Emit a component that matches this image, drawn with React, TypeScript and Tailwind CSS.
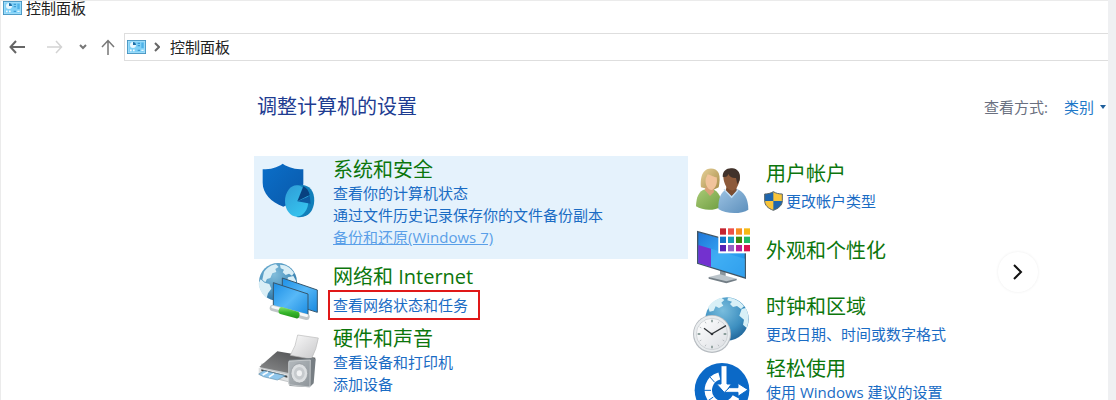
import type { ReactNode } from "react";

function PanelIcon() {
  return (
    <svg viewBox="0 0 57 42" className="h-[14px] w-[19px] shrink-0" aria-hidden="true">
      <rect x="1" y="1" width="55" height="40" fill="#7fd0f7" stroke="#3f8fbe" strokeWidth="3" />
      <rect x="4" y="4" width="49" height="34" fill="none" stroke="#a9e1fb" strokeWidth="2" />
      <circle cx="18" cy="15" r="9" fill="#e9f7fe" />
      <path d="M18 15V6a9 9 0 0 1 9 9z" fill="#1b6ea8" />
      <path d="M9 31h5M18 31h5" stroke="#f4fbff" strokeWidth="5" />
      <path d="M32 10h7M32 17h7M32 31h7" stroke="#3c9bd3" strokeWidth="4" />
      <rect x="43" y="8" width="7" height="16" fill="#4eb2e8" />
      <path d="M43 31h7" stroke="#e8f8ff" strokeWidth="4" />
    </svg>
  );
}

function SecurityIcon() {
  return (
    <svg viewBox="0 0 192 180" className="h-[60px] w-[64px]" aria-hidden="true">
      <defs>
        <linearGradient id="shield" x1="0" y1="0" x2="1" y2="1">
          <stop offset="0" stopColor="#0b6fc9" />
          <stop offset="1" stopColor="#0958a9" />
        </linearGradient>
        <linearGradient id="pie" x1="0" y1="0" x2="0.6" y2="1">
          <stop offset="0" stopColor="#2f9bd6" />
          <stop offset="1" stopColor="#36c3ee" />
        </linearGradient>
      </defs>
      <path d="M20 28c24 0 43-5 60-17 18 12 38 17 62 17v42c0 34-25 57-60 70-37-14-62-40-62-72z" fill="url(#shield)" />
      <path d="M122 76c12-4 26-2 37 6 18 14 20 46 9 68-8 15-25 24-46 21z" fill="#117fba" />
      <ellipse cx="122" cy="123" rx="35" ry="47" fill="url(#pie)" />
      <path d="M124 124 142 79c10 5 16 13 19 26z" fill="#08417f" />
      <path d="M124 124l37-16 3 23z" fill="#0e5aa1" />
    </svg>
  );
}

function Continents() {
  return (
    <g fill="#d9eef6">
      <path d="M-42-30c10-14 24-22 36-23l8 8-10 6 3 9-12 4-6 14-10 3-5 10-9-8z" />
      <path d="M6-52c18 0 34 10 42 25l-6 8-9-6-10 4-9-8 4-8-10-4z" />
      <path d="M-52-8l12 10 14 4 6 14-10 14-4 14c-14-10-24-28-24-45z" />
      <path d="M30-14l16-4 8 14c2 14-2 28-8 36l-9-8-2-14-9-10z" />
    </g>
  );
}

function NetworkIcon() {
  return (
    <svg viewBox="0 0 192 180" className="h-[60px] w-[64px]" aria-hidden="true">
      <defs>
        <radialGradient id="netGlobe" cx="0.4" cy="0.3" r="0.75">
          <stop offset="0" stopColor="#82bddb" />
          <stop offset="0.6" stopColor="#4c94bf" />
          <stop offset="1" stopColor="#2a6d9e" />
        </radialGradient>
        <linearGradient id="screenBlue" x1="0" y1="0" x2="1" y2="1">
          <stop offset="0" stopColor="#1c8fe6" />
          <stop offset="0.5" stopColor="#57b8f7" />
          <stop offset="1" stopColor="#1688df" />
        </linearGradient>
        <linearGradient id="plug" x1="0" y1="0" x2="0" y2="1">
          <stop offset="0" stopColor="#88e26d" />
          <stop offset="0.5" stopColor="#35b52a" />
          <stop offset="1" stopColor="#229018" />
        </linearGradient>
      </defs>
      <circle cx="66" cy="63" r="57" fill="url(#netGlobe)" />
      <g transform="translate(66 63)"><Continents /></g>
      <path d="M79 51 184 87v67l-105-33z" fill="url(#screenBlue)" stroke="#35566d" strokeWidth="3" />
      <path d="M52 65 156 99v72L52 135z" fill="url(#screenBlue)" stroke="#35566d" strokeWidth="3" />
      <path d="m50 141 102 27" stroke="#c0c6c8" strokeWidth="18" strokeLinecap="round" />
      <path d="m50 138 102 26" stroke="#f7f9f9" strokeWidth="8" strokeLinecap="round" />
      <path d="m77 138 49 14q7 4 4 14-3 9-10 6l-47-13q-7-3-5-12 3-10 9-9z" fill="url(#plug)" />
    </svg>
  );
}

function PrinterIcon() {
  return (
    <svg viewBox="0 0 192 180" className="h-[60px] w-[64px]" aria-hidden="true">
      <defs>
        <linearGradient id="paper" x1="0" y1="0" x2="1" y2="1">
          <stop offset="0" stopColor="#fbfbfb" />
          <stop offset="1" stopColor="#c7c7c9" />
        </linearGradient>
        <linearGradient id="printerTop" x1="0" y1="1" x2="1" y2="0">
          <stop offset="0" stopColor="#8b8c8d" />
          <stop offset="1" stopColor="#47484a" />
        </linearGradient>
        <linearGradient id="speaker" x1="0" y1="0" x2="1" y2="1">
          <stop offset="0" stopColor="#b3b9bd" />
          <stop offset="1" stopColor="#8e959a" />
        </linearGradient>
      </defs>
      <path d="m16 92 50-9 108 14v30l-70 22-96-23z" fill="#c3c6c8" />
      <path d="m14 98 50-43 114 19-2 26-74 21-92-19z" fill="url(#printerTop)" />
      <path d="m125 6 62 9q-5 33-21 63l-63-11q17-28 22-61z" fill="url(#paper)" stroke="#b9b9ba" strokeWidth="2" />
      <path d="m8 104 94 22v20L8 121z" fill="#e0e2e3" />
      <path d="m16 109 78 19v6l-78-20z" fill="#434648" />
      <path d="m24 113 64 15-24 13-42-10-14-8z" fill="#8fc6ec" stroke="#6d98b3" strokeWidth="2" />
      <path d="m36 117-16 9M54 122l-15 10" stroke="#f8fcff" strokeWidth="5" />
      <path d="m101 80 70-6 8 5-6 72-12 12-58-4q-5-1-5-7V84q0-4 3-4z" fill="#777e83" />
      <path d="m101 84 62-3-1 81-59-6q-5-1-5-7V88q0-4 3-4z" fill="url(#speaker)" stroke="#dfe2e4" strokeWidth="2" />
      <ellipse cx="130" cy="121" rx="25" ry="29" fill="#dcdfe1" stroke="#8f969a" strokeWidth="2" />
      <ellipse cx="130" cy="121" rx="16" ry="19" fill="#c6cacd" />
      <ellipse cx="130" cy="121" rx="8" ry="9" fill="#f1f2f3" />
    </svg>
  );
}

function UsersIcon() {
  return (
    <svg viewBox="0 0 192 156" className="h-[52px] w-[64px]" aria-hidden="true">
      <defs>
        <linearGradient id="greenShirt" x1="0" y1="0" x2="1" y2="1">
          <stop offset="0" stopColor="#a9ca76" />
          <stop offset="1" stopColor="#6f9e41" />
        </linearGradient>
        <linearGradient id="blueShirt" x1="0" y1="0" x2="1" y2="1">
          <stop offset="0" stopColor="#9dc3e3" />
          <stop offset="1" stopColor="#5c8fbc" />
        </linearGradient>
        <linearGradient id="hair" x1="0" y1="0" x2="1" y2="1">
          <stop offset="0" stopColor="#e7d199" />
          <stop offset="1" stopColor="#a68b47" />
        </linearGradient>
      </defs>
      <path d="M12 130c1-28 8-46 28-51h23c16 6 26 24 26 52-23 13-57 12-77-1z" fill="url(#greenShirt)" />
      <path d="M27 73c-2-15 0-36 8-46 12-15 37-13 45 3 5 12 3 29 0 43l-18 9z" fill="url(#hair)" />
      <path d="M40 73h24l2 14-12 12-15-17z" fill="#d9a278" />
      <path d="M47 34c13 3 19 9 27 9 3 18-2 32-14 38-14-2-21-16-19-34z" fill="#f1c39b" />
      <path d="M79 138c-1-31 8-52 26-60h28c24 7 36 30 36 62-20 14-68 14-90-2z" fill="url(#blueShirt)" />
      <path d="M104 69h29l1 15-15 15-18-15z" fill="#7b4c30" />
      <path d="M94 43c0-17 10-26 25-26 17 0 26 13 24 30-2 18-9 32-22 36-15-2-25-18-27-40z" fill="#8d5a3b" />
      <path d="M92 41c0-18 13-27 29-25 17 1 26 16 22 36l-7 12-4-19c-11 1-19-3-23-12-2 8-8 11-17 8z" fill="#41322b" />
      <path d="m96 79 23 24 19-22" fill="none" stroke="#c2dcf1" strokeWidth="4" />
    </svg>
  );
}

function DisplayIcon() {
  const rows = [
    ["#c52430", "#ee5148", "#f78d21", "#f6b915"],
    ["#1274c8", "#189bb8", "#3d8a0a", "#20b766"],
    ["#5523b4", "#9462c3", "#b41f9a", "#d9144f"],
  ];
  return (
    <svg viewBox="0 0 192 180" className="h-[60px] w-[64px]" aria-hidden="true">
      <defs>
        <linearGradient id="desktop" x1="0" y1="0" x2="1" y2="1">
          <stop offset="0" stopColor="#1e74d8" />
          <stop offset="0.5" stopColor="#35a6f3" />
          <stop offset="1" stopColor="#1587e3" />
        </linearGradient>
      </defs>
      <path d="M84 137v19l17 7v-25z" fill="#8b969d" />
      <path d="m50 156 34-8 50 13-31 12z" fill="#bcc5cb" />
      <path d="m50 156 53 13 31-8v5l-31 9-53-14z" fill="#737e86" />
      <path d="m17 20 143 39v100L17 115z" fill="url(#desktop)" stroke="#415666" strokeWidth="4" />
      <path d="m19 60 38 11v55l-38-12z" fill="#7331cf" />
      <path d="m57 71 102 30v56L57 125z" fill="#49b6f6" opacity="0.5" />
      <rect x="79" y="5" width="98" height="80" fill="#fff" />
      {rows.map((row, r) =>
        row.map((fill, c) => (
          <rect key={fill} x={84 + c * 24} y={10 + r * 25} width="18" height="19" fill={fill} />
        )),
      )}
    </svg>
  );
}

function ClockIcon() {
  return (
    <svg viewBox="0 0 192 186" className="h-[62px] w-[64px]" aria-hidden="true">
      <defs>
        <radialGradient id="clockGlobe" cx="0.4" cy="0.3" r="0.8">
          <stop offset="0" stopColor="#79bddd" />
          <stop offset="0.6" stopColor="#3d8fc0" />
          <stop offset="1" stopColor="#1a5c91" />
        </radialGradient>
        <linearGradient id="dial" x1="0" y1="0" x2="1" y2="1">
          <stop offset="0" stopColor="#ffffff" />
          <stop offset="1" stopColor="#dcdfe3" />
        </linearGradient>
      </defs>
      <circle cx="105" cy="78" r="65" fill="url(#clockGlobe)" />
      <path d="M48 43c10-16 25-25 40-29l9 7-9 8 6 9-13 7-10-5-6 13-12 3zM108 14c21 1 39 12 48 26l-9 8-12-9-12 3-9-9 6-7-14-4zM149 48l12-3c10 17 11 40 3 60l-11-10 3-15-14-12z" fill="#d8f0f7" />
      <circle cx="60" cy="123" r="57" fill="#b7bcc1" />
      <circle cx="60" cy="122" r="54" fill="#e9ecee" />
      <circle cx="60" cy="123" r="47" fill="url(#dial)" stroke="#c2c7cb" strokeWidth="2" />
      <path d="M60 80v8M60 158v8M17 123h8M95 123h8" stroke="#6e8580" strokeWidth="4" />
      <path d="m81 86-3 5M39 86l3 5M97 102l-5 3M23 102l5 3M97 144l-5-3M23 144l5-3M81 160l-3-5M39 160l3-5" stroke="#a2a8ac" strokeWidth="2" />
      <path d="M36 106 59 123 102 98" fill="none" stroke="#303438" strokeWidth="4" />
      <circle cx="60" cy="123" r="4" fill="#303438" />
    </svg>
  );
}

function EaseIcon() {
  return (
    <svg viewBox="0 0 192 180" className="h-[60px] w-[64px]" aria-hidden="true">
      <circle cx="90" cy="94" r="82" fill="#0b69c7" />
      <path d="M82 51A44 44 0 1 0 132 114" fill="none" stroke="#fff" strokeWidth="22" />
      <path d="m53 53 15 17M32 94h25M44 128l20-14" stroke="#0b69c7" strokeWidth="3" />
      <path d="M87 20h18v55h13L99 103 74 75h13z" fill="#fff" stroke="#0b69c7" strokeWidth="3" />
      <path d="m112 86h26V73l30 19-30 20v-12H97z" fill="#fff" stroke="#0b69c7" strokeWidth="3" />
    </svg>
  );
}

function UacShield() {
  return (
    <svg viewBox="0 0 57 60" className="h-[20px] w-[19px] shrink-0" aria-hidden="true">
      <path d="M28 2C20 7 11 9 2 9v20c0 14 10 23 26 29 16-6 27-15 27-29V9c-10 0-19-2-27-7z" fill="#f8c43a" />
      <path d="M28 2C20 7 11 9 2 9v21h26zM28 30h27c-1 13-11 22-27 28z" fill="#1e65ad" />
      <path d="M28 2C20 7 11 9 2 9v20c0 14 10 23 26 29 16-6 27-15 27-29V9c-10 0-19-2-27-7z" fill="none" stroke="#57646b" strokeWidth="3" />
    </svg>
  );
}

function TaskLink({ children, className = "" }: { children: ReactNode; className?: string }) {
  return (
    <a href="#" className={`block w-fit whitespace-nowrap text-[15px] leading-[22px] hover:underline ${className || "text-[#1a6cc4]"}`}>
      {children}
    </a>
  );
}

type CategoryProps = {
  icon: ReactNode;
  title: string;
  children?: ReactNode;
  className?: string;
  iconClass: string;
  textClass: string;
};

function Category({ icon, title, children, className = "", iconClass, textClass }: CategoryProps) {
  return (
    <section className={`flex items-start ${className}`}>
      <div className={`shrink-0 ${iconClass}`}>{icon}</div>
      <div className={`min-w-0 ${textClass}`}>
        <h2 className="whitespace-nowrap text-[20px] leading-[24px] text-[#0c760c]">
          <a href="#">{title}</a>
        </h2>
        {children}
      </div>
    </section>
  );
}

export default function App() {
  return (
    <div className="relative flex h-screen overflow-hidden bg-white font-['Open_Sans','Noto_Sans_CJK_SC',sans-serif] text-[#222]">
      <div className="min-w-0 flex-1 border-l border-t border-[#ebebeb]">
        <header>
          <div className="flex h-[32px] items-start gap-1 pl-[2px]">
            <PanelIcon />
            <h1 className="text-[15px] leading-[14px]">控制面板</h1>
          </div>
          <nav className="flex h-[28px] items-stretch" aria-label="导航">
            <div className="flex w-[123px] shrink-0 items-center text-[#666]">
              <button type="button" aria-label="后退" className="ml-2">
                <svg viewBox="0 0 16 14" className="h-[14px] w-[16px]" fill="none" stroke="#666" strokeWidth="2">
                  <path d="M16 7H1.500M7 1 1.500 7 7 13" />
                </svg>
              </button>
              <button type="button" aria-label="前进" disabled className="ml-[22px]">
                <svg viewBox="0 0 16 14" className="h-[14px] w-[16px]" fill="none" stroke="#d3d3d3" strokeWidth="1.500">
                  <path d="M0 7h14.500M9 1l5.500 6L9 13" />
                </svg>
              </button>
              <button type="button" aria-label="最近的位置" className="ml-4">
                <svg viewBox="0 0 8 6" className="h-[6px] w-[8px]" fill="none" stroke="#777" strokeWidth="2">
                  <path d="m1 1 3 3 3-3" />
                </svg>
              </button>
              <button type="button" aria-label="上移" className="ml-[14px]">
                <svg viewBox="0 0 14 16" className="h-[16px] w-[14px]" fill="none" stroke="#777" strokeWidth="1.500">
                  <path d="M7 16V1.500M1 8l6-6.500L13 8" />
                </svg>
              </button>
            </div>
            <div className="flex flex-1 items-center border border-r-0 border-[#dedede] pl-[2px]">
              <PanelIcon />
              <svg viewBox="0 0 6 10" className="ml-2 h-[10px] w-[6px]" fill="none" stroke="#666" strokeWidth="2" aria-hidden="true">
                <path d="m1 1 4 4-4 4" />
              </svg>
              <a href="#" className="ml-[10px] text-[15px] leading-[22px]">控制面板</a>
            </div>
          </nav>
        </header>

        <main>
          <div className="flex items-center justify-between pl-[256px] pt-[34px]">
            <h2 className="text-[20px] leading-[24px] text-[#1e3c91]">调整计算机的设置</h2>
            <div className="flex items-center pr-[2px]">
              <span className="mr-4 text-[15px] leading-[22px] text-[#6a7080]">查看方式:</span>
              <button type="button" className="flex items-center gap-[6px] text-[15px] leading-[22px] text-[#1e78c8]">
                类别
                <svg viewBox="0 0 6 4" className="h-[4px] w-[6px]" fill="#1e5f9c" aria-hidden="true">
                  <path d="M0 0h6L3 4z" />
                </svg>
              </button>
            </div>
          </div>

          <div className="flex pl-[253px] pt-[37px]">
            <div className="w-[434px] shrink-0">
              <Category
                icon={<SecurityIcon />}
                title="系统和安全"
                className="bg-[#e5f2fc] pb-[11px]"
                iconClass="w-[79px] pl-[2px] pt-1"
                textClass="pt-[2px]"
              >
                <TaskLink>查看你的计算机状态</TaskLink>
                <TaskLink>通过文件历史记录保存你的文件备份副本</TaskLink>
                <TaskLink className="text-[#5a9fe8] underline">备份和还原(Windows 7)</TaskLink>
              </Category>
              <Category icon={<NetworkIcon />} title="网络和 Internet" iconClass="w-[79px] pl-[2px] pt-[2px]" textClass="pt-[6px]">
                <TaskLink className="-ml-[5px] mt-[1px] border-2 border-[#e01818] py-[2px] pl-[3px] pr-[10px] text-[#1a6cc4]">
                  查看网络状态和任务
                </TaskLink>
              </Category>
              <Category icon={<PrinterIcon />} title="硬件和声音" iconClass="w-[79px] pl-[2px] pt-3" textClass="pt-[6px]">
                <TaskLink>查看设备和打印机</TaskLink>
                <TaskLink>添加设备</TaskLink>
              </Category>
            </div>

            <div className="min-w-0 flex-1">
              <Category icon={<UsersIcon />} title="用户帐户" iconClass="w-[78px] pl-1 pt-[7px]" textClass="pt-[6px]">
                <div className="-ml-[2px] mt-1 flex items-center gap-[3px]">
                  <UacShield />
                  <TaskLink>更改帐户类型</TaskLink>
                </div>
              </Category>
              <Category icon={<DisplayIcon />} title="外观和个性化" iconClass="w-[78px] pl-1 pt-[10px]" textClass="pt-6" />
              <Category icon={<ClockIcon />} title="时钟和区域" iconClass="w-[78px] pl-1 pt-2" textClass="pt-[10px]">
                <TaskLink className="mt-1 text-[#1a6cc4]">更改日期、时间或数字格式</TaskLink>
              </Category>
              <Category icon={<EaseIcon />} title="轻松使用" iconClass="w-[78px] pl-1 pt-1" textClass="pt-[2px]">
                <TaskLink>使用 Windows 建议的设置</TaskLink>
              </Category>
            </div>
          </div>
        </main>
      </div>
      <div className="w-2 shrink-0 bg-[#eff0f2]" />
      <button
        type="button"
        aria-label="下一张"
        className="absolute right-[78px] top-[252px] flex size-10 items-center justify-center rounded-full bg-white shadow-[0_0_3px_rgba(0,0,0,0.08)]"
      >
        <svg viewBox="0 0 10 16" className="h-[16px] w-[10px]" fill="none" stroke="#111" strokeWidth="2" aria-hidden="true">
          <path d="m1 1 7 7-7 7" />
        </svg>
      </button>
    </div>
  );
}
